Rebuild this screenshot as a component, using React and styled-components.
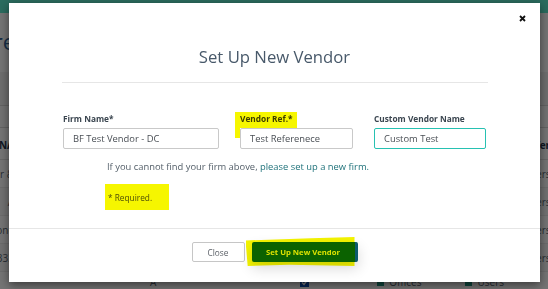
import styled, { createGlobalStyle } from "styled-components";

const GlobalStyle = createGlobalStyle`
  html, body {
    margin: 0;
    padding: 0;
    height: 100%;
    overflow: hidden;
  }
  body {
    background: #e8e8e8;
    font-family: "Open Sans", "DejaVu Sans", sans-serif;
  }
`;

const rows = [
  { left: "Bar &", right: "Users" },
  { left: "A", right: "Users" },
  { left: "Phone", right: "Users" },
  { left: "333", right: "Users" },
];

export default function App() {
  return (
    <>
      <GlobalStyle />
      <Page>
        <TopBar />
        <PageTitle>
          <span>Vendore</span>
        </PageTitle>
        <Band />
        <FilterRow />
        <TableHead>
          <LeftCell $bold>NA</LeftCell>
          <RightCell $bold>Offer</RightCell>
        </TableHead>
        {rows.map((r, i) => (
          <TableRow key={i}>
            <LeftCell>{r.left}</LeftCell>
            <RightCell>{r.right}</RightCell>
          </TableRow>
        ))}
        <BottomRow>
          <Letter>A</Letter>
          <CheckBox>
            <svg width="9" height="9" viewBox="0 0 9 9">
              <path d="M2 4.5 L4 6.5 L7 2.5" stroke="#fff" strokeWidth="1.4" fill="none" />
            </svg>
          </CheckBox>
          <IconLabel>
            <TinyIcon />
            Offices
          </IconLabel>
          <IconLabel>
            <TinyIcon />
            Users
          </IconLabel>
        </BottomRow>
      </Page>
      <Overlay />
      <Modal>
        <TopRow>
          <CloseX aria-label="close">
            <svg width="7" height="7" viewBox="0 0 7 7">
              <path d="M1 1 L6 6 M6 1 L1 6" stroke="#111" strokeWidth="1.8" />
            </svg>
          </CloseX>
        </TopRow>
        <Title>Set Up New Vendor</Title>
        <Divider />
        <Body>
          <FormGrid>
            <Field>
              <Label>Firm Name*</Label>
              <Input defaultValue="BF Test Vendor - DC" />
            </Field>
            <Field>
              <Label $marked>Vendor Ref.*</Label>
              <Input defaultValue="Test Referenece" />
            </Field>
            <Field>
              <Label>Custom Vendor Name</Label>
              <Input $focused defaultValue="Custom Test" />
            </Field>
          </FormGrid>
          <Help>
            If you cannot find your firm above, <Link>please set up a new firm.</Link>
          </Help>
          <Required>* Required.</Required>
        </Body>
        <Footer>
          <GhostButton>Close</GhostButton>
          <Marker>
            <PrimaryButton>Set Up New Vendor</PrimaryButton>
          </Marker>
        </Footer>
      </Modal>
    </>
  );
}

const Page = styled.div`
  width: 548px;
  height: 289px;
  overflow: hidden;
  display: flex;
  flex-direction: column;
  background: #e8e8e8;
`;

const TopBar = styled.div`
  height: 13px;
  flex: none;
  background: #56d6bc;
`;

const PageTitle = styled.div`
  height: 59px;
  flex: none;
  display: flex;
  align-items: center;
  font-size: 22px;
  color: #2e5c8c;
  span {
    margin-left: -72px;
    margin-top: -4px;
  }
`;

const Band = styled.div`
  height: 33px;
  flex: none;
  background: #dcdcdc;
  border-bottom: 1px solid #c4c4c4;
`;

const FilterRow = styled.div`
  height: 21px;
  flex: none;
  background: #e4e4e4;
  border-bottom: 1px solid #c4c4c4;
`;

const TableHead = styled.div`
  height: 32px;
  flex: none;
  display: flex;
  align-items: flex-end;
  justify-content: space-between;
  padding-bottom: 7px;
  box-sizing: border-box;
  border-bottom: 1px solid #cdcdcd;
  font-size: 10px;
`;

const TableRow = styled.div`
  height: 27px;
  flex: none;
  display: flex;
  align-items: center;
  justify-content: space-between;
  border-bottom: 1px solid #d6d6d6;
  font-size: 10px;
  &:nth-child(odd) {
    background: #e2e2e2;
  }
`;

const LeftCell = styled.div`
  width: 14px;
  overflow: hidden;
  display: flex;
  justify-content: flex-end;
  white-space: nowrap;
  color: ${(p) => (p.$bold ? "#1e2e44" : "#505a66")};
  font-weight: ${(p) => (p.$bold ? 700 : 400)};
`;

const RightCell = styled.div`
  width: 24px;
  overflow: hidden;
  white-space: nowrap;
  color: ${(p) => (p.$bold ? "#1e2e44" : "#505a66")};
  font-weight: ${(p) => (p.$bold ? 700 : 400)};
`;

const BottomRow = styled.div`
  height: 20px;
  flex: none;
  display: flex;
  align-items: center;
  font-size: 10px;
  color: #505a66;
  padding-left: 150px;
`;

const Letter = styled.span`
  width: 183px;
`;

const CheckBox = styled.span`
  width: 9px;
  height: 9px;
  background: #0a4aa8;
  display: flex;
  margin-right: 68px;
`;

const IconLabel = styled.span`
  display: flex;
  align-items: center;
  gap: 5px;
  margin-right: 44px;
`;

const TinyIcon = styled.span`
  width: 7px;
  height: 8px;
  background: #1c8a78;
`;

const Overlay = styled.div`
  position: fixed;
  inset: 0;
  background: rgba(0, 0, 0, 0.5);
`;

const Modal = styled.div`
  position: fixed;
  left: 9px;
  top: 3px;
  width: 531px;
  height: 279px;
  background: #fff;
  box-shadow: 0 3px 9px rgba(0, 0, 0, 0.5);
  display: flex;
  flex-direction: column;
`;

const TopRow = styled.div`
  height: 24px;
  display: flex;
  justify-content: flex-end;
  align-items: flex-start;
  padding: 12px 14px 0 0;
  box-sizing: border-box;
`;

const CloseX = styled.span`
  display: flex;
  width: 7px;
  height: 7px;
`;

const Title = styled.h4`
  margin: 18px 0 0;
  text-align: center;
  font-size: 16.7px;
  line-height: 24px;
  font-weight: 400;
  color: #48596a;
`;

const Divider = styled.hr`
  margin: 13px 52px 0 53px;
  border: 0;
  border-top: 1px solid #e6e6e6;
  height: 0;
`;

const Body = styled.div`
  flex: 1;
  padding: 30px 55px 0 54px;
  display: flex;
  flex-direction: column;
  align-items: flex-start;
`;

const FormGrid = styled.div`
  display: grid;
  grid-template-columns: 156px 113px 112px;
  column-gap: 21px;
  width: 100%;
`;

const Field = styled.div`
  display: flex;
  flex-direction: column;
  align-items: flex-start;
  gap: 3px;
`;

const Label = styled.label`
  position: relative;
  font-size: 8.3px;
  line-height: 12px;
  font-weight: 700;
  color: ${(p) => (p.$marked ? "#3c3c00" : "#3b4650")};
  ${(p) =>
    p.$marked &&
    `
    background: #f6f600;
    margin: -1px 0 -3px -5px;
    padding: 1px 4px 3px 5px;
    &::after {
      content: "";
      position: absolute;
      left: 0;
      top: 100%;
      width: 5px;
      height: 10px;
      background: #f6f600;
    }
  `}
`;

const Input = styled.input`
  width: 100%;
  height: 21px;
  box-sizing: border-box;
  border: 1px solid ${(p) => (p.$focused ? "#27c1b2" : "#c9c9c9")};
  border-radius: 2px;
  padding: 0 9px;
  font-family: inherit;
  font-size: 9.4px;
  color: #4a4f55;
  outline: none;
  background: #fff;
`;

const Help = styled.p`
  margin: 11px 0 0 44px;
  font-size: 9.4px;
  line-height: 14px;
  color: #55606a;
`;

const Link = styled.a`
  color: #1f727a;
  text-decoration: none;
`;

const Required = styled.div`
  margin: 10px 0 0 42px;
  width: 64px;
  height: 26px;
  box-sizing: border-box;
  padding-left: 3px;
  display: flex;
  align-items: center;
  background: #f6f600;
  font-size: 8.3px;
  color: #4e4e08;
`;

const Footer = styled.div`
  height: 54px;
  flex: none;
  border-top: 1px solid #e6e6e6;
  box-sizing: border-box;
  display: flex;
  justify-content: center;
  align-items: flex-start;
  gap: 7px;
  padding-top: 13px;
`;

const GhostButton = styled.button`
  width: 53px;
  height: 20px;
  background: #fff;
  border: 1px solid #c6c6c6;
  border-radius: 2px;
  font-family: inherit;
  font-size: 8.3px;
  color: #5a5f66;
  padding: 0;
`;

const Marker = styled.div`
  position: relative;
  display: flex;
  &::before {
    content: "";
    position: absolute;
    left: -6px;
    top: -5px;
    right: 3px;
    bottom: -4px;
    background: #f4f400;
    clip-path: polygon(0 12%, 60% 4%, 100% 0, 100% 100%, 40% 96%, 2% 100%);
  }
`;

const PrimaryButton = styled.button`
  position: relative;
  width: 106px;
  height: 20px;
  background: #0b6200;
  border: 0;
  border-right: 3px solid #0b5a6e;
  border-radius: 2px;
  font-family: inherit;
  font-size: 7.7px;
  font-weight: 700;
  color: #dce200;
  padding: 0;
  box-shadow: 0 6px 14px rgba(0, 0, 0, 0.16);
`;
